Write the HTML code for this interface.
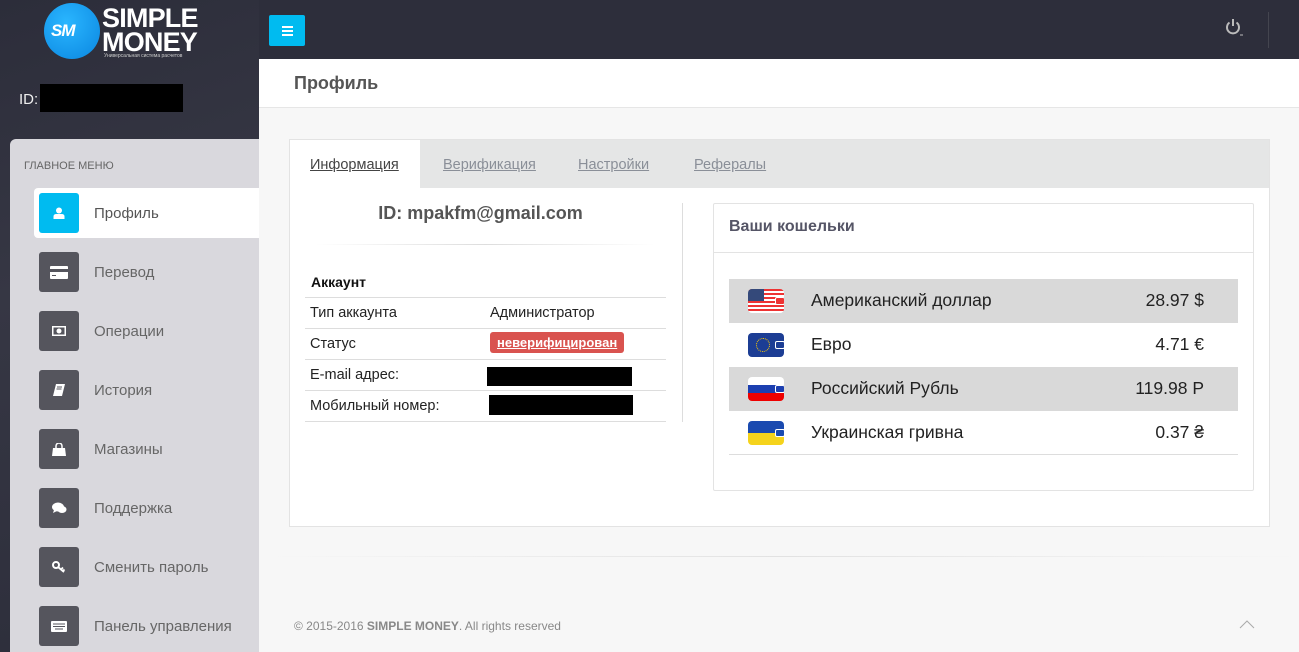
<!DOCTYPE html>
<html><head><meta charset="utf-8"><style>
*{box-sizing:border-box;margin:0;padding:0}
body{width:1299px;height:652px;overflow:hidden;background:#f7f7f7;font-family:"Liberation Sans","DejaVu Sans",sans-serif;position:relative}
.abs{position:absolute}
#top{left:0;top:0;width:1299px;height:59px;background:#2d2e3b}
#side{left:0;top:0;width:259px;height:652px;background:linear-gradient(160deg,#2c2d3a 0%,#363744 40%,#2c2d3a 100%)}
#menu{left:10px;top:139px;width:249px;height:513px;background:#d9d8dd;border-top-left-radius:6px}
.mi{position:absolute;left:24px;width:225px;height:50px}
.mi .ic{position:absolute;left:5px;top:5px;width:40px;height:40px;border-radius:3px;background:#55555d;display:flex;align-items:center;justify-content:center}
.mi .tx{position:absolute;left:60px;top:17px;font-size:15px;color:#666}
.mi.act{background:#fff;border-radius:4px 0 0 4px}
.mi.act .ic{background:#00bbf0}
.mi.act .tx{color:#555}
#hdr{left:259px;top:59px;width:1040px;height:49px;background:#fff;border-bottom:1px solid #e6e6e6}
#card{left:289px;top:139px;width:981px;height:388px;background:#fff;border:1px solid #e3e3e3}
#tabs{left:0;top:0;width:979px;height:48px;background:#e5e6e6}
.tab{position:absolute;top:17px;font-size:14.5px;color:#8a8f98;text-decoration:underline}
.row{position:absolute;left:15px;width:361px;height:31px;border-top:1px solid #ddd;font-size:14.5px;color:#222}
.row span{position:absolute;top:7px}
.wal{position:absolute;left:15px;width:509px;height:44px;font-size:17.5px;color:#222}
.wal.g{background:#d9d9d9}
.wal .n{position:absolute;left:82px;top:11px}
.wal .v{position:absolute;right:34px;top:11px}
.fl{position:absolute;left:19px;top:10px;width:36px;height:24px;border-radius:4px;overflow:hidden}
.fl i{position:absolute;right:-1px;top:8px;width:10px;height:8px;border:1px solid #fff;border-radius:2px;background:inherit}
</style></head><body>
<div id="top" class="abs"></div>
<div id="side" class="abs"></div>
<!-- logo -->
<div class="abs" style="left:44px;top:3px;width:56px;height:56px;border-radius:50%;background:radial-gradient(circle at 40% 35%,#2ab6ff,#0a86e0)"></div>
<div class="abs" style="left:51px;top:21px;font:italic bold 17px 'Liberation Sans',sans-serif;color:#fff;letter-spacing:-1px">SM</div>
<div class="abs" style="left:102px;top:6px;font:bold 27px/24px 'Liberation Sans',sans-serif;color:#fff;letter-spacing:-0.8px">SIMPLE<br>MONEY</div>
<div class="abs" style="left:104px;top:53px;font-size:5px;color:#ccc">Универсальная система расчетов</div>
<div class="abs" style="left:269px;top:15px;width:36px;height:31px;background:#00bbf0;border-radius:2px;display:flex;flex-direction:column;align-items:center;justify-content:center;gap:2px"><b style="width:11px;height:2px;background:#fff"></b><b style="width:11px;height:2px;background:#fff"></b><b style="width:11px;height:2px;background:#fff"></b></div>
<svg class="abs" style="left:1225px;top:18px" width="22" height="20" viewBox="0 0 22 20"><path d="M4.5 4.5a6 6 0 1 0 7 0" stroke="#bbb" stroke-width="2" fill="none"/><path d="M8 1v7" stroke="#bbb" stroke-width="2"/><path d="M15 17h3" stroke="#bbb" stroke-width="1"/></svg>
<div class="abs" style="left:1268px;top:12px;width:1px;height:36px;background:#44454f"></div>
<div class="abs" style="left:19px;top:91px;font-size:15px;color:#eee">ID:</div>
<div class="abs" style="left:40px;top:84px;width:143px;height:28px;background:#000"></div>

<div id="menu" class="abs">
<div class="abs" style="left:14px;top:21px;font-size:11px;color:#666">ГЛАВНОЕ МЕНЮ</div>
<div class="mi act" style="top:49px"><div class="ic"><svg width="12" height="12" viewBox="0 0 12 12"><circle cx="6" cy="3.5" r="3" fill="#fff"/><path d="M0.5 12v-2.5q0-2.5 3-2.5h5q3 0 3 2.5V12z" fill="#fff"/></svg></div><div class="tx">Профиль</div></div>
<div class="mi" style="top:108px"><div class="ic"><svg width="18" height="13"><rect x="0" y="0" width="18" height="13" rx="1" fill="#fff"/><rect y="3" width="18" height="3" fill="#55555d"/><rect x="2" y="9" width="4" height="1" fill="#55555d"/></svg></div><div class="tx">Перевод</div></div>
<div class="mi" style="top:167px"><div class="ic"><svg width="14" height="10"><rect width="14" height="10" fill="#fff"/><rect x="1.5" y="1.5" width="11" height="7" fill="#55555d"/><circle cx="7" cy="5" r="2.5" fill="#fff"/></svg></div><div class="tx">Операции</div></div>
<div class="mi" style="top:226px"><div class="ic"><svg width="12" height="12"><path d="M3 0h9l-3 12H0z" fill="#fff"/><path d="M4 3h5M3.5 5h5" stroke="#55555d"/></svg></div><div class="tx">История</div></div>
<div class="mi" style="top:285px"><div class="ic"><svg width="14" height="13"><path d="M4 5V3a3 3 0 0 1 6 0v2" stroke="#fff" fill="none" stroke-width="1.5"/><path d="M1 5h12l1 8H0z" fill="#fff"/></svg></div><div class="tx">Магазины</div></div>
<div class="mi" style="top:344px"><div class="ic"><svg width="15" height="12"><ellipse cx="6" cy="5" rx="6" ry="4.5" fill="#fff"/><ellipse cx="10" cy="7.5" rx="4.5" ry="3.5" fill="#fff"/><path d="M2 8l-1 3 4-2z" fill="#fff"/></svg></div><div class="tx">Поддержка</div></div>
<div class="mi" style="top:403px"><div class="ic"><svg width="14" height="12"><circle cx="4" cy="4" r="3" stroke="#fff" stroke-width="2" fill="none"/><path d="M6 6l6 5M9 8.5l2-2M11 10l1.5-1.5" stroke="#fff" stroke-width="1.8"/></svg></div><div class="tx">Сменить пароль</div></div>
<div class="mi" style="top:462px"><div class="ic"><svg width="16" height="11"><rect width="16" height="11" rx="1" fill="#fff"/><path d="M2 3h12M2 5.5h12M4 8h8" stroke="#55555d"/></svg></div><div class="tx">Панель управления</div></div>
</div>

<div id="hdr" class="abs"><div class="abs" style="left:35px;top:14px;font-size:18px;font-weight:bold;color:#555">Профиль</div></div>

<div id="card" class="abs">
<div id="tabs" class="abs">
<div class="abs" style="left:0;top:0;width:130px;height:49px;background:#fff"></div>
<div class="tab" style="left:20px;color:#444">Информация</div>
<div class="tab" style="left:153px">Верификация</div>
<div class="tab" style="left:288px">Настройки</div>
<div class="tab" style="left:404px">Рефералы</div>
</div>
<div class="abs" style="left:0;width:381px;top:63px;text-align:center;font-size:18px;font-weight:bold;color:#555">ID: mpakfm@gmail.com</div>
<div class="abs" style="left:25px;top:104px;width:340px;height:1px;background:linear-gradient(90deg,transparent,#ddd,transparent)"></div>
<div class="abs" style="left:21px;top:134px;font-size:14px;font-weight:bold;color:#111">Аккаунт</div>
<div class="row" style="top:157px"><span style="left:5px">Тип аккаунта</span><span style="left:185px">Администратор</span></div>
<div class="row" style="top:188px"><span style="left:5px">Статус</span><span style="left:185px;top:3px;background:#d9534f;color:#fff;font-weight:bold;text-decoration:underline;font-size:13px;padding:3px 7px;border-radius:3px">неверифицирован</span></div>
<div class="row" style="top:219px"><span style="left:5px">E-mail адрес:</span><div class="abs" style="left:182px;top:7px;width:145px;height:19px;background:#000"></div></div>
<div class="row" style="top:250px;border-bottom:1px solid #ddd;height:32px"><span style="left:5px">Мобильный номер:</span><div class="abs" style="left:184px;top:4px;width:144px;height:20px;background:#000"></div></div>
<div class="abs" style="left:392px;top:63px;width:1px;height:219px;background:#ddd"></div>

<div class="abs" style="left:423px;top:63px;width:541px;height:288px;border:1px solid #e3e3e3;border-radius:2px">
<div class="abs" style="left:15px;top:14px;font-size:16px;font-weight:bold;color:#556">Ваши кошельки</div>
<div class="abs" style="left:0;top:48px;width:539px;height:1px;background:#e3e3e3"></div>
<div class="wal g" style="top:75px"><div class="fl" style="background:repeating-linear-gradient(#e33 0 2px,#fff 2px 4px)"><b class="abs" style="left:0;top:0;width:16px;height:12px;background:#34497a"></b><i style="background:#e33"></i></div><span class="n">Американский доллар</span><span class="v">28.97 $</span></div>
<div class="wal" style="top:119px"><div class="fl" style="background:#1c3d94"><b class="abs" style="left:8px;top:5px;width:14px;height:14px;border:1px dotted #fc0;border-radius:50%"></b><i style="background:#1c3d94"></i></div><span class="n">Евро</span><span class="v">4.71 €</span></div>
<div class="wal g" style="top:163px"><div class="fl" style="background:linear-gradient(#fff 0 33%,#1c3fb0 33% 66%,#e00 66%)"><i style="background:#1c3fb0"></i></div><span class="n">Российский Рубль</span><span class="v">119.98 Р</span></div>
<div class="wal" style="top:207px;border-bottom:1px solid #ddd"><div class="fl" style="background:linear-gradient(#1a4ab0 0 50%,#f5d31c 50%)"><i style="background:#1a4ab0"></i></div><span class="n">Украинская гривна</span><span class="v">0.37 ₴</span></div>
</div>
</div>

<div class="abs" style="left:270px;top:556px;width:1029px;height:1px;background:linear-gradient(90deg,transparent,#e2e2e2,transparent)"></div>
<div class="abs" style="left:294px;top:619px;font-size:12px;color:#888">© 2015-2016 <b>SIMPLE MONEY</b>. All rights reserved</div>
<svg class="abs" style="left:1239px;top:619px" width="16" height="10"><path d="M1 9l7-7 7 7" stroke="#aaa" fill="none"/></svg>
</body></html>
